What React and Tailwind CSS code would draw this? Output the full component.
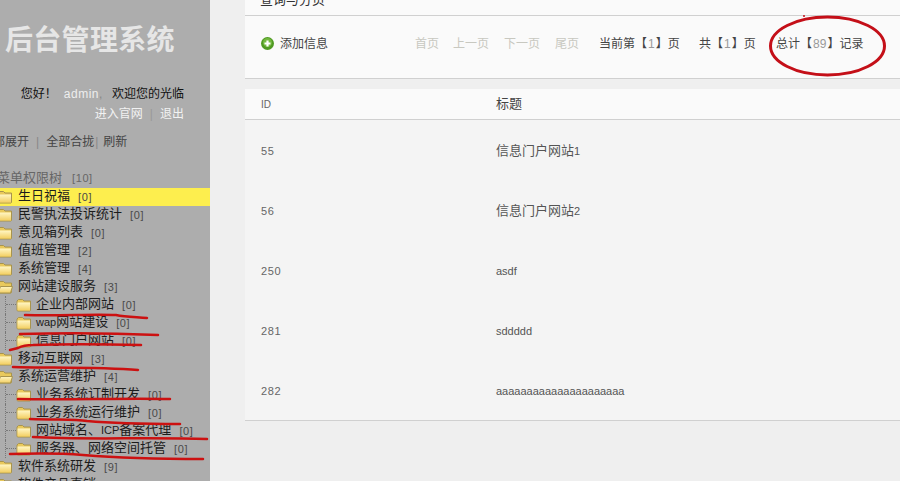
const cjk = '[font-family:"Liberation_Sans","Noto_Sans_CJK_SC",sans-serif]'

const tree = [
  { label: '生日祝福', count: 0, active: true },
  { label: '民警执法投诉统计', count: 0 },
  { label: '意见箱列表', count: 0 },
  { label: '值班管理', count: 2 },
  { label: '系统管理', count: 4 },
  { label: '网站建设服务', count: 3, open: true },
  { label: '企业内部网站', count: 0, child: true },
  { label: 'wap网站建设', count: 0, child: true },
  { label: '信息门户网站', count: 0, child: true },
  { label: '移动互联网', count: 3 },
  { label: '系统运营维护', count: 4, open: true },
  { label: '业务系统订制开发', count: 0, child: true },
  { label: '业务系统运行维护', count: 0, child: true },
  { label: '网站域名、ICP备案代理', count: 0, child: true },
  { label: '服务器、网络空间托管', count: 0, child: true },
  { label: '软件系统研发', count: 9 },
  { label: '软件产品直销', count: 0 },
]

const rows = [
  { id: 55, title: '信息门户网站', num: '1' },
  { id: 56, title: '信息门户网站', num: '2' },
  { id: 250, title: 'asdf' },
  { id: 281, title: 'sddddd' },
  { id: 282, title: 'aaaaaaaaaaaaaaaaaaaaa' },
]

// latin runs sit a size smaller than the chinese around them
function Label({ text }) {
  return text.split(/([A-Za-z]+)/).map((part, i) =>
    /^[A-Za-z]/.test(part)
      ? <span key={i} className="text-[11px]">{part}</span>
      : part
  )
}

function Folder({ open }) {
  return (
    <svg width="16" height="14" viewBox="0 0 16 14" className="shrink-0">
      <defs>
        <linearGradient id="fold" x1="0" y1="0" x2="0" y2="1">
          <stop offset="0" stopColor="#fff6c4" />
          <stop offset="1" stopColor="#f3cf62" />
        </linearGradient>
      </defs>
      <path d="M1 12V3L2.5 1.5H6.5L8 3H14.5V12.5L14 13H1.5z" fill="#e9c95c" stroke="#a8944e" />
      {open ? (
        <path d="M1 13 3.5 6.5H15.5L13.5 13z" fill="url(#fold)" stroke="#a8944e" />
      ) : (
        <path d="M1.5 4.5H14V12.5H1.5z" fill="url(#fold)" />
      )}
    </svg>
  )
}

function TreeRow({ item }) {
  return (
    <div className={`flex items-center h-[18px] text-[13px] ${item.active ? 'bg-[#fdee4e]' : ''} ${item.child ? '' : '-ml-[3px]'}`}>
      {item.child && (
        <span className="ml-[5px] w-[11px] h-full border-l border-dotted border-[#777] shrink-0">
          <span className="block h-[9px] border-b border-dotted border-[#777]" />
        </span>
      )}
      <Folder open={item.open} />
      <span className={`text-[#1c1c1c] -mt-[2px] ${item.child ? 'ml-[4px]' : 'ml-[5px]'}`}><Label text={item.label} /></span>
      <span className="text-[#4a4a4a] ml-[8px] text-[11px] tracking-[0.6px]">[{item.count}]</span>
    </div>
  )
}

function Scribbles() {
  return (
    <svg width="900" height="481" className="absolute left-0 top-0 pointer-events-none">
      <g fill="none" stroke="#cc1111" strokeWidth="2.5" strokeLinecap="round">
        <path d="M25 315C60 316 90 314 116 315 125 317 135 317 147 318" />
        <path d="M20 334C60 333 110 333 158 335" />
        <path d="M10 350 18 348C24 345 28 345 33 345 60 344 100 344 141 345" />
        <path d="M13 367C50 368 100 367 138 370" />
        <path d="M18 399C70 400 120 398 170 399" />
        <path d="M30 419C60 420 75 419 87 421 120 424 150 424 180 424" />
        <path d="M33 437C80 440 150 437 207 439" />
        <path d="M10 454C50 453 70 454 83 455 120 458 160 459 203 459" />
        <ellipse cx="827.5" cy="46" rx="57" ry="29" stroke="#c40f18" strokeWidth="3" />
      </g>
      <circle cx="804" cy="16" r="1" fill="#c40f18" />
    </svg>
  )
}

export default function App() {
  return (
    <div className={`relative flex w-[900px] h-[481px] overflow-hidden bg-[#efefef] ${cjk}`}>
      {/* Sidebar */}
      <aside className="w-[210px] shrink-0 bg-[#adadad] overflow-hidden">
        <div className="pl-[5px] pt-[21px] text-[28px] leading-[40px] font-bold text-[#e6e6e6] tracking-[0.3px]">后台管理系统</div>
        <div className="mt-[23px] pr-[26px] text-right text-[12px] leading-[20px]">
          <div className="text-[#111] whitespace-nowrap">
            您好！<span className="text-[#eee] ml-[7px] tracking-[0.5px]">admin</span><span className="inline-block w-[13px] text-left text-[#888]">,</span>欢迎您的光临
          </div>
          <div className="text-[#f2f2f2]">
            进入官网<span className="text-[#999] mx-[7px]">|</span>退出
          </div>
        </div>
        <div className="mt-[8px] text-[12px] leading-[20px] text-[#444] -ml-[19px] whitespace-nowrap">
          全部展开<span className="text-[#888] mx-[7px]">|</span>全部合拢<span className="text-[#888] ml-[1px] mr-[5px]">|</span>刷新
        </div>
        <div className="mt-[16px] -ml-[3px] h-[20px] text-[13px] leading-[20px] text-[#666] whitespace-nowrap">
          菜单权限树<span className="ml-[10px] text-[11px] tracking-[0.6px]">[10]</span>
        </div>
        <div className="whitespace-nowrap">
          {tree.map(item => <TreeRow key={item.label} item={item} />)}
        </div>
      </aside>

      {/* Main */}
      <main className="flex-1 pl-[35px] flex flex-col text-[12px] text-[#444]">
        <div className="h-[16px] bg-[#fafafa] border-b border-[#d0d0d0] text-[13px] text-[#333] overflow-hidden shrink-0">
          <div className="pl-[15px] leading-[16px] -mt-[8px]">查询与分页</div>
        </div>
        <div className="h-[63px] bg-[#fafafa] border-b border-[#d0d0d0] flex items-center pb-[6px] pl-[16px] shrink-0 whitespace-nowrap">
          <svg width="13" height="13" viewBox="0 0 13 13" className="shrink-0 -translate-y-[1px]">
            <circle cx="6.5" cy="6.5" r="6.5" fill="#4f9a22" />
            <circle cx="6.5" cy="5.5" r="4.5" fill="#73b83f" />
            <path d="M6.5 3.5v6M3.5 6.5h6" stroke="#fff" strokeWidth="2.2" />
          </svg>
          <span className="ml-[6px] w-[135px]">添加信息</span>
          <span className="text-[#c8c8c0] w-[38px]">首页</span>
          <span className="text-[#c8c8c0] w-[51px]">上一页</span>
          <span className="text-[#c8c8c0] w-[51px]">下一页</span>
          <span className="text-[#c8c8c0] w-[44px]">尾页</span>
          <span className="w-[100px]">当前第【<span className="text-[#999] mx-[1px]">1</span>】页</span>
          <span className="w-[77px]">共【<span className="text-[#999] mx-[1px]">1</span>】页</span>
          <span>总计【<span className="text-[#999] mx-[1px]">89</span>】记录</span>
        </div>
        <div className="mt-[10px] h-[31px] bg-[#fafafa] border-b border-[#d0d0d0] flex items-center shrink-0">
          <span className="pl-[16px] w-[251px] text-[10px] text-[#666]">ID</span>
          <span className="text-[13px] text-[#444]">标题</span>
        </div>
        <div className="bg-[#f4f4f4] border-b border-[#d0d0d0] shrink-0">
          {rows.map(r => (
            <div key={r.id} className="h-[60px] flex items-center pt-[2px] text-[11px] text-[#666]">
              <span className="pl-[16px] w-[251px] tracking-[0.6px]">{r.id}</span>
              <span className="text-[13px] text-[#555]">
                <Label text={r.title} />
                {r.num && <span className="text-[11px]">{r.num}</span>}
              </span>
            </div>
          ))}
        </div>
      </main>
      <Scribbles />
    </div>
  )
}
